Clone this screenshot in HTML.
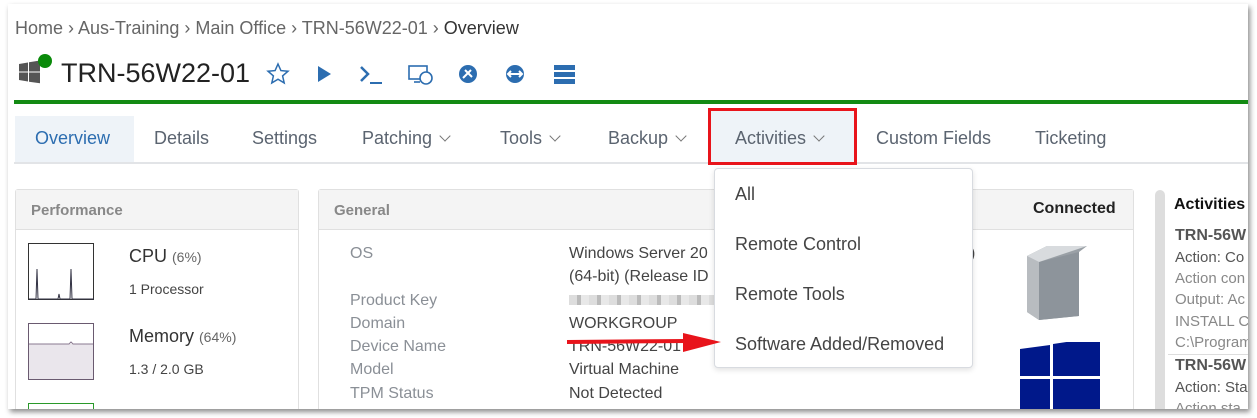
<!DOCTYPE html>
<html><head><meta charset="utf-8"><style>
*{margin:0;padding:0;box-sizing:border-box}
body{width:1257px;height:418px;background:#fff;font-family:"Liberation Sans",sans-serif;position:relative;overflow:hidden}
.frame{position:absolute;left:8px;top:4px;width:1240px;height:405px;background:#fff;box-shadow:2px 3px 5px rgba(0,0,0,.45)}
#clip{position:absolute;left:0;top:0;width:1248px;height:409px;overflow:hidden}
.a,.tab,.lbl,.val,.act{white-space:nowrap}
.a{position:absolute}
.tab{position:absolute;top:128px;font-size:18px;color:#5b6470}
.chev{display:inline-block;width:8px;height:8px;border-right:1.4px solid #777;border-bottom:1.4px solid #777;transform:rotate(45deg);margin-left:9px;position:relative;top:-4px}
.lbl{position:absolute;left:350px;font-size:16px;color:#8a8f96}
.val{position:absolute;left:569px;font-size:16px;color:#444}
.act{position:absolute;left:1175px;font-size:15px;color:#888}
</style></head><body>
<div class="frame"></div>
<div id="clip">
<div class="a" style="left:15px;top:18px;font-size:18px;color:#666">Home › Aus-Training › Main Office › TRN-56W22-01 › <span style="color:#333">Overview</span></div>
<svg class="a" style="left:17px;top:52px" width="36" height="34"><g fill="#555"><path d="M2 12l9-1.5v9H2z M12 10.3l11-1.8v11H12z M2 20.5h9v9L2 28z M12 20.5h11v10.8L12 29.7z"/></g><circle cx="28" cy="9" r="7" fill="#0a8a0a"/></svg>
<div class="a" style="left:61px;top:58px;font-size:27px;color:#222">TRN-56W22-01</div>
<svg class="a" style="left:266px;top:62px" width="320" height="26" fill="#2c6db0" stroke="#2c6db0">
<path d="M12 2l2.9 6.6 7.1.6-5.4 4.7 1.6 7-6.2-3.7-6.2 3.7 1.6-7L2 9.2l7.1-.6z" fill="none" stroke-width="1.5"/>
<path d="M52 4v16l13-8z" stroke="none"/>
<path d="M95 5l7 7-7 7" fill="none" stroke-width="2.5"/><path d="M104 21h12" stroke-width="2"/>
<rect x="143" y="4" width="18" height="13" fill="none" stroke-width="1.6"/><path d="M148 20h6" stroke-width="1.6"/><circle cx="160" cy="16" r="6" fill="#fff" stroke-width="1.6"/>
<circle cx="202" cy="12" r="9" stroke="none"/><path d="M197 16l8-8M199 8l7 7" stroke="#fff" stroke-width="2"/>
<circle cx="249" cy="12" r="9" stroke="none"/><path d="M242 12h14M245 9l-3 3 3 3M253 9l3 3-3 3" stroke="#fff" stroke-width="2" fill="none"/>
<rect x="288" y="3" width="21" height="5" stroke="none"/><rect x="288" y="10" width="21" height="5" stroke="none"/><rect x="288" y="17" width="21" height="5" stroke="none"/>
</svg>
<div class="a" style="left:14px;top:100px;width:1234px;height:4px;background:#138a13"></div>
<div class="a" style="left:15px;top:116px;width:119px;height:46px;background:#eef3f8"></div>
<div class="a" style="left:14px;top:162px;width:1234px;height:2px;background:#e2e4e7"></div>
<div class="tab" style="left:35px;color:#2c6db0">Overview</div>
<div class="tab" style="left:154px">Details</div>
<div class="tab" style="left:252px">Settings</div>
<div class="tab" style="left:362px">Patching<span class="chev"></span></div>
<div class="tab" style="left:500px">Tools<span class="chev"></span></div>
<div class="tab" style="left:608px">Backup<span class="chev"></span></div>
<div class="a" style="left:708px;top:108px;width:149px;height:57px;background:#eef3f8;border:3px solid #e8141b"></div>
<div class="tab" style="left:735px">Activities<span class="chev"></span></div>
<div class="tab" style="left:876px">Custom Fields</div>
<div class="tab" style="left:1035px">Ticketing</div>
<div class="a" style="left:15px;top:189px;width:284px;height:230px;border:1px solid #e0e0e0;border-radius:3px"></div>
<div class="a" style="left:16px;top:190px;width:282px;height:40px;background:#f4f4f4;border-bottom:1px solid #e0e0e0"></div>
<div class="a" style="left:31px;top:202px;font-size:15px;color:#888;font-weight:bold">Performance</div>
<svg class="a" style="left:28px;top:243px" width="66" height="57"><rect x=".5" y=".5" width="65" height="56" fill="#fff" stroke="#333"/><path d="M1 56h7l1-30 1 30h20l1-5 1 5h10l1-30 1 30h22" fill="none" stroke="#334"/></svg>
<div class="a" style="left:129px;top:246px;font-size:18px;color:#333">CPU <span style="font-size:14px;color:#666">(6%)</span></div>
<div class="a" style="left:129px;top:281px;font-size:14px;color:#444">1 Processor</div>
<svg class="a" style="left:28px;top:323px" width="66" height="57"><rect x=".5" y=".5" width="65" height="56" fill="#fff" stroke="#6a5a70"/><rect x="1" y="21" width="64" height="35" fill="#eae6ec"/><path d="M1 21h40l2-2 2 2h20" stroke="#8a7a90" fill="none"/></svg>
<div class="a" style="left:129px;top:326px;font-size:18px;color:#333">Memory <span style="font-size:14px;color:#666">(64%)</span></div>
<div class="a" style="left:129px;top:361px;font-size:14px;color:#444">1.3 / 2.0 GB</div>
<div class="a" style="left:28px;top:403px;width:66px;height:10px;border:1px solid #2a9a2a"></div>
<div class="a" style="left:318px;top:189px;width:816px;height:230px;border:1px solid #e0e0e0;border-radius:3px"></div>
<div class="a" style="left:319px;top:190px;width:814px;height:40px;background:#f4f4f4;border-bottom:1px solid #e0e0e0"></div>
<div class="a" style="left:334px;top:202px;font-size:15px;color:#888;font-weight:bold">General</div>
<div class="a" style="left:1033px;top:200px;font-size:16px;color:#222;font-weight:bold">Connected</div>
<div class="lbl" style="top:245px">OS</div>
<div class="val" style="top:245px">Windows Server 20</div>
<div class="val" style="top:268px">(64-bit) (Release ID</div>
<div class="a" style="left:970px;top:245px;font-size:16px;color:#444">)</div>
<div class="lbl" style="top:292px">Product Key</div>
<div class="a" style="left:569px;top:295px;width:145px;height:10px;background:repeating-linear-gradient(90deg,#ddd 0 8px,#bbb 8px 12px,#e8e8e8 12px 20px)"></div>
<div class="lbl" style="top:315px">Domain</div><div class="val" style="top:315px">WORKGROUP</div>
<div class="lbl" style="top:338px">Device Name</div><div class="val" style="top:338px">TRN-56W22-01</div>
<div class="lbl" style="top:361px">Model</div><div class="val" style="top:361px">Virtual Machine</div>
<div class="lbl" style="top:385px">TPM Status</div><div class="val" style="top:385px">Not Detected</div>
<svg class="a" style="left:1025px;top:242px" width="70" height="82"><path d="M2 14l20-10h40l-8 6v64l-40 4L2 70z" fill="#9aa0a6"/><path d="M2 14l12 6v58L2 70z" fill="#b8bcc0"/><path d="M14 20l40-10v64l-40 4z" fill="#8d949b"/><path d="M2 14l20-10h40l-48 16z" fill="#d8dbde"/></svg>
<svg class="a" style="left:1020px;top:342px" width="80" height="70" fill="#00188a"><path d="M0 7l30-4v31H0zM33 2l47-7v39H33zM0 37h30v33H0zM33 37h47v33H33z"/></svg>
<div class="a" style="left:1155px;top:190px;width:10px;height:230px;background:#ddd;border-radius:5px 5px 0 0"></div>
<div class="a" style="left:1174px;top:196px;font-size:16px;font-weight:bold;color:#111">Activities</div>
<div class="act" style="top:227px;font-weight:bold;color:#555;font-size:16px">TRN-56W</div>
<div class="act" style="top:249px;color:#555">Action: Co</div>
<div class="act" style="top:270px">Action con</div>
<div class="act" style="top:291px">Output: Ac</div>
<div class="act" style="top:313px">INSTALL C</div>
<div class="act" style="top:334px">C:\Program</div>
<div class="a" style="left:1168px;top:354px;width:80px;height:1px;background:#ddd"></div>
<div class="act" style="top:357px;font-weight:bold;color:#555;font-size:16px">TRN-56W</div>
<div class="act" style="top:379px;color:#555">Action: Sta</div>
<div class="act" style="top:400px">Action sta</div>
<div class="a" style="left:714px;top:168px;width:259px;height:200px;background:#fff;border:1px solid #d8dbe0;border-radius:4px;box-shadow:0 2px 6px rgba(0,0,0,.12)"></div>
<div class="a" style="left:735px;top:184px;font-size:18px;color:#444">All</div>
<div class="a" style="left:735px;top:234px;font-size:18px;color:#444">Remote Control</div>
<div class="a" style="left:735px;top:284px;font-size:18px;color:#444">Remote Tools</div>
<div class="a" style="left:735px;top:334px;font-size:18px;color:#444">Software Added/Removed</div>
<svg class="a" style="left:565px;top:330px" width="160" height="26"><path d="M2 12l120-1" stroke="#e8141b" stroke-width="4"/><path d="M118 3l38 9-38 10z" fill="#e8141b"/></svg>
</div>
</body></html>
